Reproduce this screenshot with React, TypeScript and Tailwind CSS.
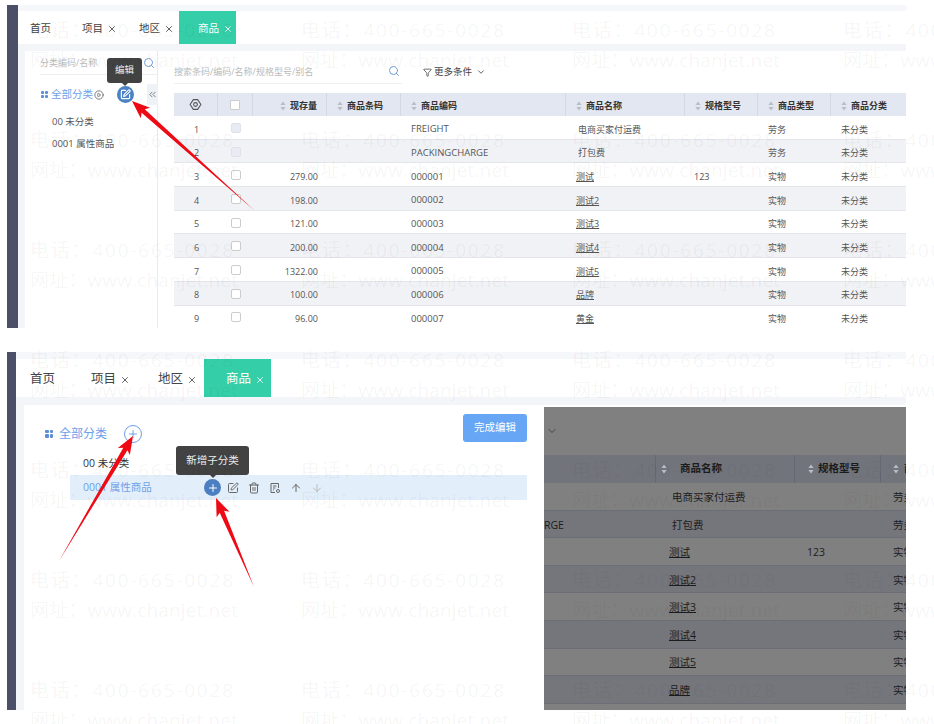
import React from "react";
import { ArrowDown, ArrowUp, ChevronDown, ChevronsLeft, CirclePlay, Funnel, Plus, Search, SquarePen, Trash2, X } from "lucide-react";

const FONT = "font-['Open_Sans','Noto_Sans_CJK_SC',sans-serif]";

const rows = [
  ["1", "", "FREIGHT", "电商买家付运费", "", "劳务"],
  ["2", "", "PACKINGCHARGE", "打包费", "", "劳务"],
  ["3", "279.00", "000001", "测试", "123", "实物"],
  ["4", "198.00", "000002", "测试2", "", "实物"],
  ["5", "121.00", "000003", "测试3", "", "实物"],
  ["6", "200.00", "000004", "测试4", "", "实物"],
  ["7", "1322.00", "000005", "测试5", "", "实物"],
  ["8", "100.00", "000006", "品牌", "", "实物"],
  ["9", "96.00", "000007", "黄金", "", "实物"],
];

function GridDots({ className }: { className: string }) {
  return (
    <span className={`grid shrink-0 grid-cols-2 gap-[1px] ${className}`}>
      <i className="rounded-[1px] bg-current" />
      <i className="rounded-[1px] bg-current" />
      <i className="rounded-[1px] bg-current" />
      <i className="rounded-[1px] bg-current" />
    </span>
  );
}

function Sort() {
  return (
    <svg width="6" height="10" viewBox="0 0 6 10" className="shrink-0 text-[#b9bdc6]" fill="currentColor">
      <path d="M3 0.5 5.6 4H.4zM3 9.5 .4 6h5.2z" />
    </svg>
  );
}

function Gear() {
  return (
    <svg width="13" height="13" viewBox="0 0 24 24" fill="none" stroke="#555" strokeWidth="2" strokeLinejoin="round">
      <path d="M8 3h8l6 9-6 9H8l-6-9z" />
      <circle cx="12" cy="12" r="3.5" />
    </svg>
  );
}

function DocIcon({ size }: { size: number }) {
  return (
    <svg width={size} height={size} viewBox="0 0 24 24" fill="none" stroke="currentColor" strokeWidth="2">
      <path d="M12 21H4V3h15v9" />
      <path d="M8 8h7M8 12h5M8 16h2" />
      <circle cx="18" cy="18" r="3" />
    </svg>
  );
}

function Tooltip({ text, className }: { text: string; className: string }) {
  return (
    <div className={`absolute z-10 flex items-center justify-center rounded-[3px] bg-[#424242] text-[#eee] ${className}`}>
      {text}
      <span className="absolute left-1/2 -bottom-[3px] h-0 w-0 -translate-x-1/2 border-x-[3px] border-t-[3px] border-x-transparent border-t-[#424242]" />
    </div>
  );
}

function Tabs({ gaps, active, text }: { gaps: string[]; active: string; text: string }) {
  return (
    <div className={`flex h-full items-center bg-white text-[#444] ${text}`}>
      <span className={gaps[0]}>首页</span>
      <span className={`flex items-center gap-1 ${gaps[1]}`}>项目<X size={10} /></span>
      <span className={`flex items-center gap-1 ${gaps[2]}`}>地区<X size={10} /></span>
      <span className={`flex h-full items-center gap-1 bg-[#34cfa8] text-white ${active}`}>商品<X size={10} /></span>
    </div>
  );
}

const topCols = "grid grid-cols-[44px_35px_74px_74px_165px_119px_73px_73px_75px]";

function TopTable() {
  const heads = ["现存量", "商品条码", "商品编码", "商品名称", "规格型号", "商品类型", "商品分类"];
  return (
    <div className="text-[9px] text-[#555]">
      <div className={`${topCols} h-[23px] items-center bg-[#e2e7f2] font-semibold text-[#333]`}>
        <div className="flex h-full items-center justify-center border-r border-[#d3d8e2]"><Gear /></div>
        <div className="flex h-full items-center justify-center border-r border-[#d3d8e2]">
          <span className="h-[10px] w-[10px] rounded-[1px] border border-[#ccc] bg-white" />
        </div>
        {heads.map((h, i) => (
          <div key={h} className={`flex h-full items-center gap-[4px] border-r border-[#d3d8e2] pt-[2px] last:border-r-0 ${i === 0 ? "justify-end pr-[9px]" : "pl-[10px]"}`}>
            <Sort />{h}
          </div>
        ))}
      </div>
      {rows.map((r, i) => (
        <div key={r[0]} className={`${topCols} h-[23.7px] items-center border-b border-[#e3e5ea] pt-[4px] ${i % 2 ? "bg-[#f1f2f6]" : "bg-white"}`}>
          <div className="pl-[20px]">{r[0]}</div>
          <div className="flex justify-center pb-[3px]">
            <span className={`h-[10px] w-[10px] rounded-[2px] border ${i < 2 ? "border-[#dfe2ea] bg-[#e9ebf2]" : "border-[#ccc] bg-white"}`} />
          </div>
          <div className="pr-[9px] text-right">{r[1]}</div>
          <div />
          <div className="pl-[10px] text-[9.5px]">{r[2]}</div>
          <div className={i < 2 ? "pl-[12px]" : "pl-[10px] underline"}>{r[3]}</div>
          <div className="pl-[9px]">{r[4]}</div>
          <div className="pl-[10px]">{r[5]}</div>
          <div className="pl-[10px]">未分类</div>
        </div>
      ))}
    </div>
  );
}

function TopPanel() {
  return (
    <div className="ml-[7px] mt-[5px] flex h-[323px] w-[899px] overflow-hidden">
      <div className="w-[11px] shrink-0 bg-[#4b5068]" />
      <div className="flex min-w-0 flex-1 flex-col">
        <div className="h-[6px] shrink-0 bg-[#f6f7fa]" />
        <div className="h-[33px] shrink-0">
          <Tabs gaps={["ml-[12px] pt-[2px]", "ml-[31px] pt-[2px]", "ml-[22px] pt-[2px]"]} active="ml-[5px] w-[57px] pl-[19px] pt-[2px]" text="text-[10.5px]" />
        </div>
        <div className="flex min-h-0 flex-1 flex-col bg-[#f3f5f8] pl-[7px] pt-[7px]">
          <div className="flex min-h-0 flex-1 bg-white">
            <aside className="relative w-[133px] shrink-0 border-r border-[#e8eaee]">
              <div className="ml-[15px] flex h-[24px] items-center justify-between border-b border-[#eceef2] text-[9px] text-[#bbb]">
                分类编码/名称
                <Search size={12} className="mr-[2px] text-[#6f9fd8]" />
              </div>
              <Tooltip text="编辑" className="left-[82px] top-[7px] h-[25px] w-[35px] text-[9.5px]" />
              <div className="relative mt-[9px] flex h-[21px] items-center whitespace-nowrap pl-[16px] text-[10.5px] text-[#6ea0e8]">
                <GridDots className="mr-[3px] h-[7px] w-[7px] text-[#5c8fd6]" />
                <span className="shrink-0">全部分类</span>
                <CirclePlay size={10} className="ml-[1px] shrink-0 text-[#666]" />
                <span className="ml-[13px] flex h-[17px] w-[17px] shrink-0 items-center justify-center rounded-full bg-[#4a82c4] text-white"><SquarePen size={11} strokeWidth={2.5} /></span>
                <span className="ml-[13px] flex h-[21px] w-[11px] shrink-0 items-center justify-center bg-[#eef1f6] text-[#777]"><ChevronsLeft size={11} /></span>
              </div>
              <div className="mt-[6px] pl-[27px] text-[9.5px] leading-[22px] text-[#555]">
                <div>00 未分类</div>
                <div>0001 属性商品</div>
              </div>
            </aside>
            <main className="min-w-0 flex-1 pl-[16px]">
              <div className="flex h-[42px] items-start pt-[14px] text-[9px] text-[#bbb]">
                <div className="flex h-[19px] w-[228px] items-start justify-between border-b border-[#eceef2] pr-[2px]">
                  搜索条码/编码/名称/规格型号/别名
                  <Search size={12} className="text-[#6f9fd8]" />
                </div>
                <div className="ml-[21px] flex items-center gap-[2px] text-[9.5px] text-[#444]">
                  <Funnel size={9} />更多条件<ChevronDown size={10} className="ml-[2px]" />
                </div>
              </div>
              <TopTable />
            </main>
          </div>
        </div>
      </div>
    </div>
  );
}

const darkCols = "grid grid-cols-[112px_139px_86px_25px]";

function DarkTable() {
  return (
    <div className="mt-[2px] flex w-[362px] shrink-0 flex-col overflow-hidden bg-[#808080] text-[10.5px] text-[#1c1c1c]">
      <div className="flex h-[48px] shrink-0 items-center pl-[2px] text-[#444]"><ChevronDown size={12} /></div>
      <div className={`${darkCols} h-[28px] shrink-0 items-center bg-[#72747c] font-semibold`}>
        <div className="h-full border-r border-[#666872]" />
        <div className="flex h-full items-center gap-[13px] border-r border-[#666872] pl-[5px]"><Sort />商品名称</div>
        <div className="flex h-full items-center gap-[4px] border-r border-[#666872] pl-[13px]"><Sort />规格型号</div>
        <div className="flex h-full items-center gap-[5px] overflow-hidden whitespace-nowrap pl-[12px]"><Sort />商品类型</div>
      </div>
      {rows.slice(0, 8).map((r, i) => (
        <div key={r[0]} className={`${darkCols} h-[27.6px] shrink-0 items-center border-b border-[#6c6e77] pt-[3px] ${i % 2 ? "bg-[#75767c]" : "bg-[#808080]"}`}>
          <div className="overflow-hidden text-left">{i === 1 ? "RGE" : ""}</div>
          <div className={i < 2 ? "pl-[16px]" : "pl-[13px] underline"}>{r[3]}</div>
          <div className="pl-[12px]">{r[4]}</div>
          <div className="overflow-hidden whitespace-nowrap pl-[12px]">{r[5]}</div>
        </div>
      ))}
    </div>
  );
}

function BottomPanel() {
  return (
    <div className="ml-[7px] mt-[24px] flex h-[358px] w-[899px] overflow-hidden">
      <div className="w-[9px] shrink-0 bg-[#4b5068]" />
      <div className="flex min-w-0 flex-1 flex-col">
        <div className="h-[7px] shrink-0 bg-[#f6f7fa]" />
        <div className="h-[38px] shrink-0">
          <Tabs gaps={["ml-[14px] pt-[3px]", "ml-[36px] pt-[3px]", "ml-[28px] pt-[3px]"]} active="ml-[7px] w-[67px] pl-[22px] pt-[3px]" text="text-[12.5px]" />
        </div>
        <div className="flex min-h-0 flex-1 flex-col bg-[#f3f5f8] pl-[8px] pt-[8px]">
          <div className="flex min-h-0 flex-1 bg-white">
            <div className="relative w-[520px] shrink-0">
              <div className="flex h-[37px] items-end justify-between">
                <div className="ml-[21px] flex h-[19px] translate-y-[1px] items-center text-[12px] text-[#6ea0e8]">
                  <GridDots className="mr-[6px] h-[8px] w-[8px] text-[#5c8fd6]" />
                  全部分类
                  <span className="ml-[17px] flex h-[18px] w-[18px] items-center justify-center rounded-full border border-[#6ea0e8]"><Plus size={12} /></span>
                </div>
                <button className="mr-[17px] h-[28px] w-[64px] rounded-[3px] bg-[#66a6f5] text-[10.5px] text-white">完成编辑</button>
              </div>
              <div className="ml-[59px] mt-[12px] text-[10.5px] leading-[18px] text-[#333]">00 未分类</div>
              <div className="relative ml-[46px] mr-[17px] mt-[3px] flex h-[25px] items-center bg-[#e3eefb] pl-[13px] text-[10.5px] text-[#6ea0e8]">
                <span className="w-[121px]">0001 属性商品</span>
                <span className="flex h-[17px] w-[17px] items-center justify-center rounded-full bg-[#4a7fc1] text-white"><Plus size={12} /></span>
                <span className="ml-[6px] flex items-center gap-[9px] text-[#666]">
                  <SquarePen size={12} />
                  <Trash2 size={12} />
                  <DocIcon size={12} />
                  <ArrowUp size={12} />
                  <ArrowDown size={12} className="text-[#bbb]" />
                </span>
              </div>
              <Tooltip text="新增子分类" className="left-[152px] top-[41px] h-[29px] w-[73px] text-[10.5px]" />
            </div>
            <DarkTable />
          </div>
        </div>
      </div>
    </div>
  );
}

function Arrow({ from, to }: { from: [number, number]; to: [number, number] }) {
  const dx = to[0] - from[0];
  const dy = to[1] - from[1];
  const len = Math.hypot(dx, dy);
  const ux = dx / len;
  const uy = dy / len;
  const nx = -uy;
  const ny = ux;
  const head = 18;
  const bx = to[0] - ux * head;
  const by = to[1] - uy * head;
  const nb = to[0] - ux * (head - 3);
  const mb = to[1] - uy * (head - 3);
  const p = (x: number, y: number, w: number) => `${x + nx * w},${y + ny * w}`;
  const points = [
    p(from[0], from[1], 0),
    p(nb, mb, 2.4),
    p(bx, by, 7),
    `${to[0]},${to[1]}`,
    p(bx, by, -7),
    p(nb, mb, -2.4),
  ].join(" ");
  return <polygon points={points} fill="#ee0a14" />;
}

function Watermark() {
  const cols = [0, 1, 2, 3];
  const lines = [0, 1, 2, 3, 4, 5, 6];
  return (
    <div className="pointer-events-none absolute inset-0 z-20 overflow-hidden pl-[30px] pt-[15px]">
      {lines.map((l) => (
        <div key={l} className="flex h-[110px] gap-[68px]">
          {cols.map((c) => (
            <div key={c} className="w-[203px] shrink-0 whitespace-nowrap text-[19px] leading-[30px] text-[#000]/[0.05]">
              <div className="tracking-[1.8px]">电话：400-665-0028</div>
              <div className="tracking-[0.15px]">网址：www.chanjet.net</div>
            </div>
          ))}
        </div>
      ))}
    </div>
  );
}

export default function App() {
  return (
    <div className={`relative h-[724px] w-[934px] overflow-hidden bg-white ${FONT}`}>
      <TopPanel />
      <BottomPanel />
      <Watermark />
      <svg className="pointer-events-none absolute inset-0 z-30" width="934" height="724">
        <Arrow from={[255, 211]} to={[132, 101]} />
        <Arrow from={[59, 561]} to={[133, 436]} />
        <Arrow from={[254, 587]} to={[216, 498]} />
      </svg>
    </div>
  );
}
